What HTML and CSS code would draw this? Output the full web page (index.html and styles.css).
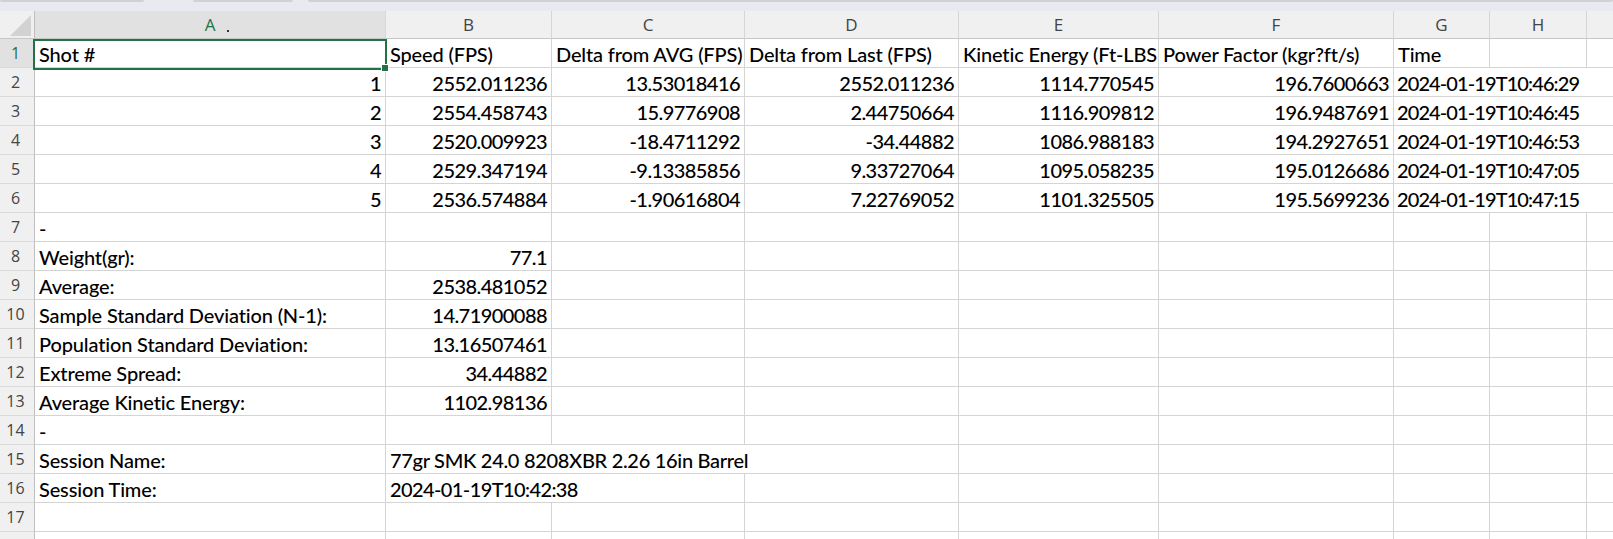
FILE: index.html
```html
<!DOCTYPE html>
<html lang="en">
<head>
<meta charset="utf-8">
<title>Sheet</title>
<link rel="stylesheet" href="styles.css">
</head>
<body>
<div class="topbar">
  <span class="tab t1"></span>
  <span class="tab t2"></span>
  <span class="tab t3"></span>
</div>
<div class="sheet">
  <div class="corner"><svg width="34" height="27" viewBox="0 0 34 27"><polygon points="10,25 31,25 31,4" fill="#d2d2d2"/></svg></div>
  <div class="ch sel">A<span class="dot"></span></div>
  <div class="ch">B</div>
  <div class="ch">C</div>
  <div class="ch">D</div>
  <div class="ch">E</div>
  <div class="ch">F</div>
  <div class="ch">G</div>
  <div class="ch">H</div>
  <div class="ch last"></div>

  <div class="rh sel">1</div>
  <div class="c">Shot #</div>
  <div class="c">Speed (FPS)</div>
  <div class="c">Delta from AVG (FPS)</div>
  <div class="c">Delta from Last (FPS)</div>
  <div class="c">Kinetic Energy (Ft-LBS</div>
  <div class="c">Power Factor (kgr?ft/s)</div>
  <div class="c">Time</div>
  <div class="c"></div>
  <div class="c last"></div>

  <div class="rh">2</div>
  <div class="c r">1</div>
  <div class="c r">2552.011236</div>
  <div class="c r">13.53018416</div>
  <div class="c r">2552.011236</div>
  <div class="c r">1114.770545</div>
  <div class="c r">196.7600663</div>
  <div class="c tail">2024-01-19T10:46:29</div>

  <div class="rh">3</div>
  <div class="c r">2</div>
  <div class="c r">2554.458743</div>
  <div class="c r">15.9776908</div>
  <div class="c r">2.44750664</div>
  <div class="c r">1116.909812</div>
  <div class="c r">196.9487691</div>
  <div class="c tail">2024-01-19T10:46:45</div>

  <div class="rh">4</div>
  <div class="c r">3</div>
  <div class="c r">2520.009923</div>
  <div class="c r">-18.4711292</div>
  <div class="c r">-34.44882</div>
  <div class="c r">1086.988183</div>
  <div class="c r">194.2927651</div>
  <div class="c tail">2024-01-19T10:46:53</div>

  <div class="rh">5</div>
  <div class="c r">4</div>
  <div class="c r">2529.347194</div>
  <div class="c r">-9.13385856</div>
  <div class="c r">9.33727064</div>
  <div class="c r">1095.058235</div>
  <div class="c r">195.0126686</div>
  <div class="c tail">2024-01-19T10:47:05</div>

  <div class="rh">6</div>
  <div class="c r">5</div>
  <div class="c r">2536.574884</div>
  <div class="c r">-1.90616804</div>
  <div class="c r">7.22769052</div>
  <div class="c r">1101.325505</div>
  <div class="c r">195.5699236</div>
  <div class="c tail">2024-01-19T10:47:15</div>

  <div class="rh">7</div>
  <div class="c">-</div>
  <div class="c"></div><div class="c"></div><div class="c"></div><div class="c"></div><div class="c"></div><div class="c"></div><div class="c"></div><div class="c last"></div>

  <div class="rh">8</div>
  <div class="c">Weight(gr):</div>
  <div class="c r">77.1</div>
  <div class="c"></div><div class="c"></div><div class="c"></div><div class="c"></div><div class="c"></div><div class="c"></div><div class="c last"></div>

  <div class="rh">9</div>
  <div class="c">Average:</div>
  <div class="c r">2538.481052</div>
  <div class="c"></div><div class="c"></div><div class="c"></div><div class="c"></div><div class="c"></div><div class="c"></div><div class="c last"></div>

  <div class="rh">10</div>
  <div class="c">Sample Standard Deviation (N-1):</div>
  <div class="c r">14.71900088</div>
  <div class="c"></div><div class="c"></div><div class="c"></div><div class="c"></div><div class="c"></div><div class="c"></div><div class="c last"></div>

  <div class="rh">11</div>
  <div class="c">Population Standard Deviation:</div>
  <div class="c r">13.16507461</div>
  <div class="c"></div><div class="c"></div><div class="c"></div><div class="c"></div><div class="c"></div><div class="c"></div><div class="c last"></div>

  <div class="rh">12</div>
  <div class="c">Extreme Spread:</div>
  <div class="c r">34.44882</div>
  <div class="c"></div><div class="c"></div><div class="c"></div><div class="c"></div><div class="c"></div><div class="c"></div><div class="c last"></div>

  <div class="rh">13</div>
  <div class="c">Average Kinetic Energy:</div>
  <div class="c r">1102.98136</div>
  <div class="c"></div><div class="c"></div><div class="c"></div><div class="c"></div><div class="c"></div><div class="c"></div><div class="c last"></div>

  <div class="rh">14</div>
  <div class="c">-</div>
  <div class="c"></div><div class="c"></div><div class="c"></div><div class="c"></div><div class="c"></div><div class="c"></div><div class="c"></div><div class="c last"></div>

  <div class="rh">15</div>
  <div class="c">Session Name:</div>
  <div class="c span3 n">77gr SMK 24.0 8208XBR 2.26 16in Barrel</div>
  <div class="c"></div><div class="c"></div><div class="c"></div><div class="c"></div><div class="c last"></div>

  <div class="rh">16</div>
  <div class="c">Session Time:</div>
  <div class="c span2 t">2024-01-19T10:42:38</div>
  <div class="c"></div><div class="c"></div><div class="c"></div><div class="c"></div><div class="c"></div><div class="c last"></div>

  <div class="rh">17</div>
  <div class="c"></div><div class="c"></div><div class="c"></div><div class="c"></div><div class="c"></div><div class="c"></div><div class="c"></div><div class="c"></div><div class="c last"></div>

  <div class="rh"></div>
  <div class="c"></div><div class="c"></div><div class="c"></div><div class="c"></div><div class="c"></div><div class="c"></div><div class="c"></div><div class="c"></div><div class="c last"></div>

  <div class="selection"><span class="handle"></span></div>
</div>
</body>
</html>
```

FILE: styles.css
```css
html, body {
  margin: 0;
  padding: 0;
  background: #ffffff;
  overflow: hidden;
  height: 539px;
}

.topbar {
  height: 11px;
  background: #e8eaef;
  display: flex;
  align-items: flex-start;
}

.tab {
  display: block;
  height: 2px;
  background: #cfd1d6;
  border-radius: 0 0 3px 3px;
}
.t1 { width: 144px; margin-right: 49px; }
.t2 { width: 100px; margin-right: 15px; }
.t3 { flex: 1; }

.sheet {
  position: relative;
  display: grid;
  grid-template-columns: 35px 351px 166px 193px 214px 200px 235px 96px 97px 1fr;
  grid-template-rows: 28px;
  grid-auto-rows: 29px;
  font-family: Lato, "Liberation Sans", sans-serif;
  font-size: 20px;
  font-weight: 500;
  letter-spacing: -0.15px;
  color: #000;
}

.corner {
  background: #f0f0f0;
  border-right: 1px solid #bfbfbf;
  border-bottom: 1px solid #c6c6c6;
  display: flex;
}

.ch {
  position: relative;
  background: #f0f0f0;
  border-right: 1px solid #d6d6d6;
  border-bottom: 1px solid #c6c6c6;
  font-family: "Open Sans", "Noto Sans", sans-serif;
  font-size: 17px;
  font-weight: 400;
  letter-spacing: 0;
  color: #444444;
  text-align: center;
  line-height: 28px;
}
.ch.sel {
  background: #e1e1e1;
  color: #217346;
}
.ch.last { border-right: none; }

.dot {
  position: absolute;
  left: 192px;
  top: 19px;
  width: 2px;
  height: 2px;
  background: #333;
}

.rh {
  background: #f0f0f0;
  border-right: 1px solid #bfbfbf;
  border-bottom: 1px solid #dadada;
  font-family: "Open Sans", "Noto Sans", sans-serif;
  font-size: 16px;
  font-weight: 400;
  letter-spacing: 0;
  color: #444444;
  text-align: center;
  padding-right: 3px;
  line-height: 29px;
}
.rh.sel {
  background: #e1e1e1;
  color: #217346;
}

.c {
  border-right: 1px solid #d4d4d4;
  border-bottom: 1px solid #d4d4d4;
  padding: 0 4px 0 4px;
  white-space: nowrap;
  overflow: hidden;
  line-height: 30px;
}
.c.r {
  text-align: right;
  letter-spacing: -0.55px;
}
.c.last { border-right: none; }
.c.tail {
  grid-column: 8 / -1;
  border-right: none;
  padding-left: 3px;
  letter-spacing: -0.9px;
}
.c.t { letter-spacing: -0.6px; }
.c.n { letter-spacing: -0.3px; }
.span3 { grid-column: span 3; }
.span2 { grid-column: span 2; }

.selection {
  position: absolute;
  left: 33px;
  top: 28px;
  width: 350px;
  height: 27px;
  border: 2px solid #217346;
  pointer-events: none;
}
.handle {
  position: absolute;
  right: -4px;
  bottom: -4px;
  width: 6px;
  height: 6px;
  background: #217346;
  border: 1px solid #ffffff;
}
```
